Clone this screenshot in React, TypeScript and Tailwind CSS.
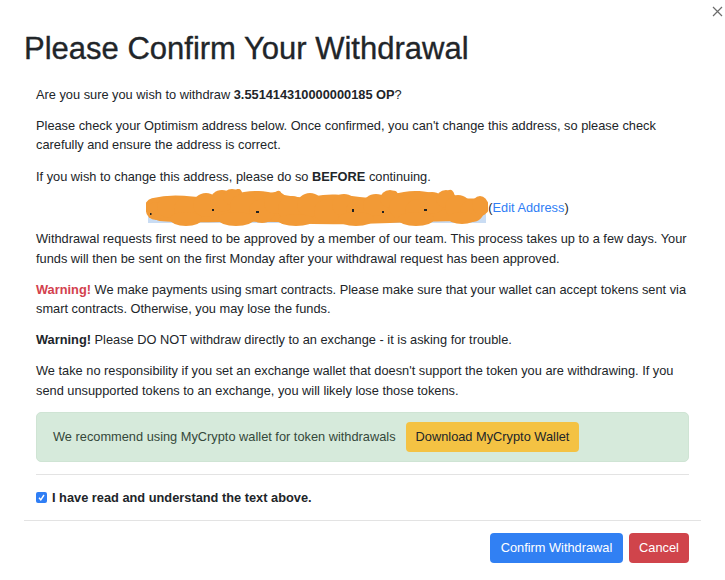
import React from "react";

const blobs: [number, number, number, number][] = [
  [10, 22, 10, 9], [24, 18, 13, 11], [42, 20, 14, 12], [60, 16, 13, 12], [76, 12, 12, 11],
  [86, 8, 9, 8], [98, 18, 14, 13], [116, 22, 13, 12], [130, 14, 12, 11], [146, 20, 14, 13],
  [164, 16, 13, 12], [182, 22, 14, 12], [198, 16, 12, 11], [214, 22, 14, 12], [230, 16, 13, 11],
  [244, 10, 10, 9], [256, 18, 13, 12], [272, 22, 13, 12], [286, 14, 12, 11], [300, 10, 10, 9],
  [312, 18, 13, 12], [326, 22, 12, 11], [334, 16, 8, 9], [40, 30, 16, 7], [90, 30, 18, 7],
  [150, 31, 18, 6], [210, 30, 18, 7], [270, 30, 18, 7], [316, 29, 14, 6],
];

function Scribble() {
  return (
    <svg width="342" height="38" viewBox="0 0 342 38" className="inline-block align-middle -my-[10px]">
      <rect x="2" y="16" width="338" height="18" fill="#c9dcf3" />
      <g stroke="#f29a36" strokeLinecap="round" strokeLinejoin="round" fill="none">
        <path d="M8 18 C 40 10, 60 24, 90 14 S 140 22, 170 16 S 220 24, 250 14 S 300 22, 334 18" strokeWidth="18" />
        <path d="M14 26 C 50 30, 100 24, 150 28 S 250 26, 326 26" strokeWidth="12" />
        <path d="M80 10 L 92 4 M 240 10 L 248 6 M 296 10 L 304 5 M 120 12 L 132 6" strokeWidth="8" />
      </g>
      <g fill="#f29a36">
        {blobs.map(([cx, cy, rx, ry], i) => (
          <ellipse key={i} cx={cx} cy={cy} rx={rx} ry={ry} />
        ))}
      </g>
      <g fill="#222">
        <rect x="66" y="20" width="2" height="2" />
        <rect x="110" y="22" width="3" height="2" />
        <rect x="206" y="20" width="2" height="3" />
        <rect x="236" y="22" width="2" height="2" />
        <rect x="278" y="20" width="3" height="2" />
        <rect x="4" y="24" width="1.5" height="2" />
      </g>
    </svg>
  );
}

export default function App() {
  return (
    <div className="relative w-[725px] h-[580px] bg-white text-[#212529] font-['Liberation_Sans',Arial,sans-serif] overflow-hidden">
      <svg className="absolute left-[712px] top-[6px]" width="11" height="11" viewBox="0 0 11 11">
        <path d="M1 1 L10 10 M10 1 L1 10" stroke="#6b6b6b" strokeWidth="1.2" />
      </svg>

      <div className="mx-[24px]">
        <div className="pt-[30px]">
          <h1 className="text-[31px] leading-[37px] font-normal [-webkit-text-stroke:0.35px_#212529]">
            Please Confirm Your Withdrawal
          </h1>
        </div>

        <div className="px-[12px] pt-[18px] pb-[13px] text-[12.8px] leading-[19.2px]">
          <p className="mb-[12px]">
            Are you sure you wish to withdraw <b>3.551414310000000185 OP</b>?
          </p>
          <p className="mb-[12px]">
            Please check your Optimism address below. Once confirmed, you can't change this address, so please check
            carefully and ensure the address is correct.
          </p>
          <p className="mb-[12px]">
            If you wish to change this address, please do so <b>BEFORE</b> continuing.
          </p>
          <p className="mb-[12px] text-center pr-[10px]">
            <Scribble />
            (<span className="text-[#2f7ef5]">Edit Address</span>)
          </p>
          <p className="mb-[12px]">
            Withdrawal requests first need to be approved by a member of our team. This process takes up to a few days. Your
            funds will then be sent on the first Monday after your withdrawal request has been approved.
          </p>
          <p className="mb-[12px]">
            <b className="text-[#d3414d]">Warning!</b>{" "}We make payments using smart contracts. Please make sure that your wallet can accept tokens sent via
            smart contracts. Otherwise, you may lose the funds.
          </p>
          <p className="mb-[12px]">
            <b>Warning!</b>{" "}Please DO NOT withdraw directly to an exchange - it is asking for trouble.
          </p>
          <p className="mb-[12px]">
            We take no responsibility if you set an exchange wallet that doesn't support the token you are withdrawing. If you
            send unsupported tokens to an exchange, you will likely lose those tokens.
          </p>

          <div className="h-[50px] rounded-[5px] bg-[#d6eadb] border border-[#cfe4d4] flex items-center pl-[16px] text-[#34483a]">
            <span>We recommend using MyCrypto wallet for token withdrawals</span>
            <span className="ml-[10px] h-[30px] px-[10px] rounded-[4px] bg-[#f4c243] text-[#212529] flex items-center">
              Download MyCrypto Wallet
            </span>
          </div>

          <div className="mt-[12px] border-t border-[#e3e3e3]" />

          <div className="mt-[13px] flex items-center font-bold">
            <span className="w-[11px] h-[11px] rounded-[2px] bg-[#2f7ef5] flex items-center justify-center mr-[5px]">
              <svg width="9" height="9" viewBox="0 0 9 9">
                <path d="M2 4.8 L3.8 6.8 L7 2" stroke="white" strokeWidth="1.4" fill="none" />
              </svg>
            </span>
            I have read and understand the text above.
          </div>
        </div>

        <div className="border-t border-[#e3e3e3] pt-[12px] pr-[12px] flex justify-end gap-[6px] text-[12.8px]">
          <span className="h-[30px] w-[133px] rounded-[4px] bg-[#3180f3] text-white flex items-center justify-center">
            Confirm Withdrawal
          </span>
          <span className="h-[30px] w-[60px] rounded-[4px] bg-[#d0444b] text-white flex items-center justify-center">
            Cancel
          </span>
        </div>
      </div>
    </div>
  );
}
